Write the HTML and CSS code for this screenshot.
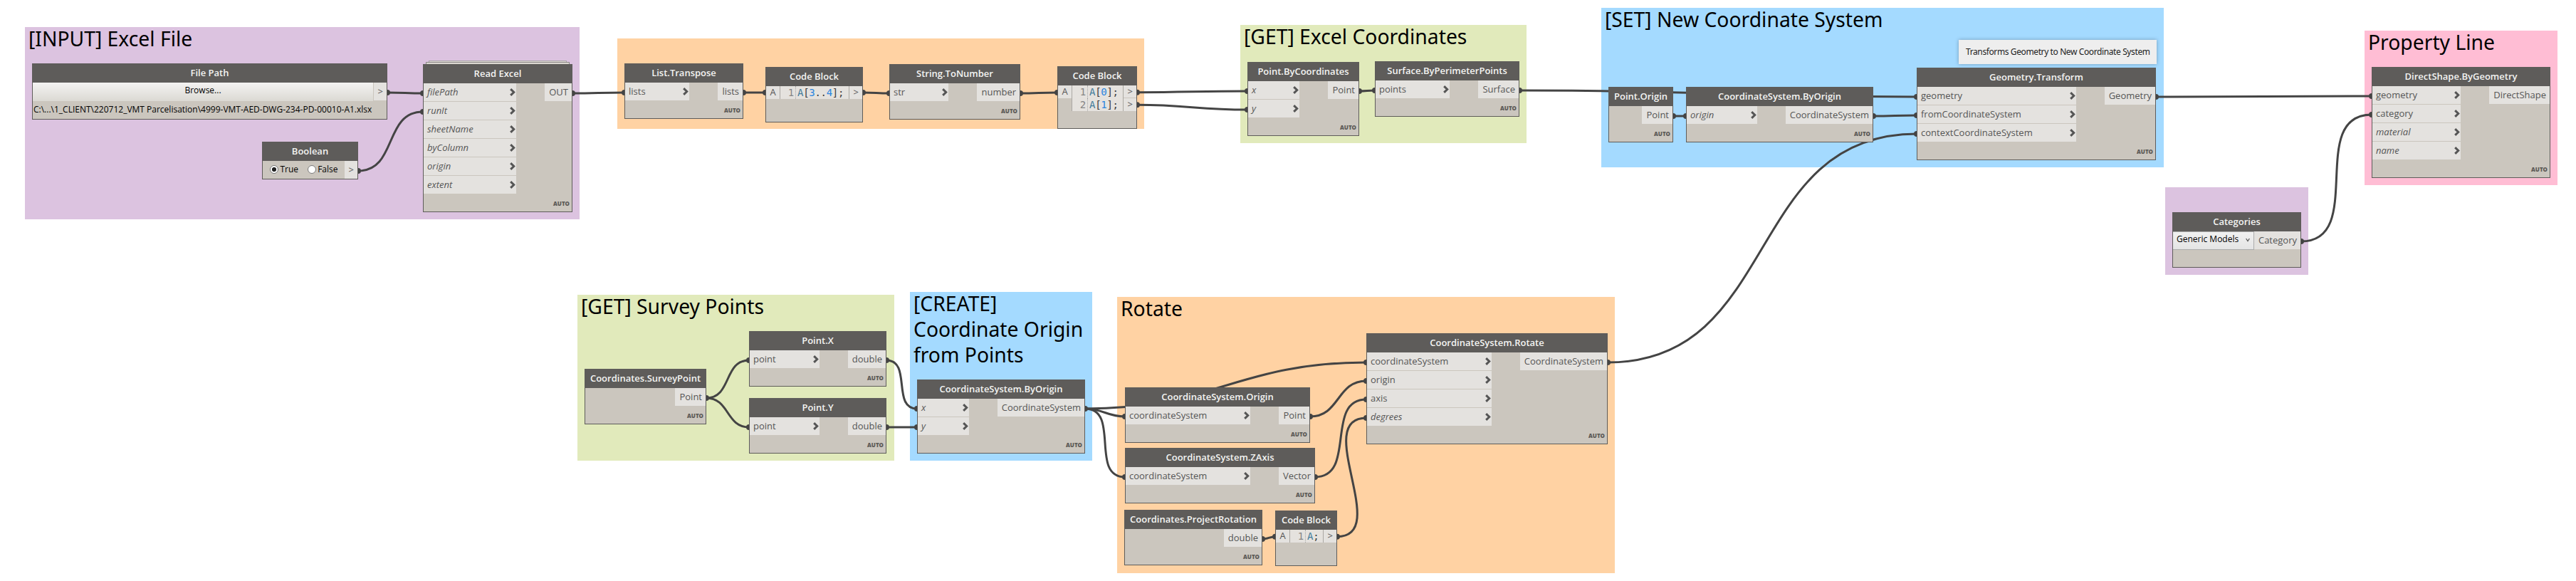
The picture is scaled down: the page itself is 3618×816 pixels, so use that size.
FILE: index.html
```
<!DOCTYPE html>
<html lang="en">
<head>
<meta charset="utf-8">
<title>Property line graph</title>
<link rel="stylesheet" href="styles.css">
</head>
<body>
<svg class="defs" aria-hidden="true">
  <symbol id="chev" viewBox="0 0 8 11"><path d="M1.2 1.1 5.7 5.5 1.2 9.9"/></symbol>
</svg>
<main class="canvas">
  <section class="group lilac g-input"><h2>[INPUT] Excel File</h2></section>
  <section class="group orange g-parse"></section>
  <section class="group green g-excel"><h2>[GET] Excel Coordinates</h2></section>
  <section class="group blue g-set"><h2>[SET] New Coordinate System</h2></section>
  <section class="group pink g-property"><h2>Property Line</h2></section>
  <section class="group lilac g-category"></section>
  <section class="group green g-survey"><h2>[GET] Survey Points</h2></section>
  <section class="group blue g-create"><h2>[CREATE]<br>Coordinate Origin<br>from Points</h2></section>
  <section class="group orange g-rotate"><h2>Rotate</h2></section>

  <svg class="wires" viewBox="0 0 3618 816">
    <g class="lines">
      <path d="M544 130C566.500 130 571.500 131 594 131"/>
      <path d="M503 240C558.400 240 538.600 157 594 157"/>
      <path d="M804 131C837 131 844 130 877 130"/>
      <path d="M1044 130H1075"/>
      <path d="M1212 130C1229 130 1232 131 1249 131"/>
      <path d="M1433 131C1456 131 1462 130 1485 130"/>
      <path d="M1597 129.700C1667 129.700 1682 128 1752 128"/>
      <path d="M1597 147.300C1667 147.300 1682 154 1752 154"/>
      <path d="M1909 128C1919 128 1921 127 1931 127"/>
      <path d="M2134 127C2385 127 2441 136 2692 136"/>
      <path d="M2350 163H2368"/>
      <path d="M2631 163C2658 163 2665 162 2692 162"/>
      <path d="M2258 509C2501 509 2449 188 2692 188"/>
      <path d="M3028 136C3164 136 3195 135 3331 135"/>
      <path d="M3232 339C3323.700 339 3239.300 161 3331 161"/>
      <path d="M992 559C1028 559 1016 506 1052 506"/>
      <path d="M992 559C1024.700 559 1019.300 600 1052 600"/>
      <path d="M1245 506C1281 506 1252 574 1288 574"/>
      <path d="M1245 600H1288"/>
      <path d="M1524 574C1704 574 1739 509 1919 509"/>
      <path d="M1524 574C1549.700 574 1554.300 585 1580 585"/>
      <path d="M1524 574C1574 574 1530 670 1580 670"/>
      <path d="M1840 585C1882 585 1877 535 1919 535"/>
      <path d="M1847 670C1906 670 1860 561 1919 561"/>
      <path d="M1773 757C1781 757 1783 753.700 1791 753.700"/>
      <path d="M1878 753.700C1955 753.700 1842 587 1919 587"/>
    </g>
    <g class="dots">
      <circle cx="544" cy="130" r="4"/><circle cx="594" cy="131" r="4"/>
      <circle cx="503" cy="240" r="4"/><circle cx="594" cy="157" r="4"/>
      <circle cx="804" cy="131" r="4"/><circle cx="877" cy="130" r="4"/>
      <circle cx="1044" cy="130" r="4"/><circle cx="1075" cy="130" r="4"/>
      <circle cx="1212" cy="130" r="4"/><circle cx="1249" cy="131" r="4"/>
      <circle cx="1433" cy="131" r="4"/><circle cx="1485" cy="130" r="4"/>
      <circle cx="1597" cy="129.700" r="4"/><circle cx="1752" cy="128" r="4"/>
      <circle cx="1597" cy="147.300" r="4"/><circle cx="1752" cy="154" r="4"/>
      <circle cx="1909" cy="128" r="4"/><circle cx="1931" cy="127" r="4"/>
      <circle cx="2134" cy="127" r="4"/><circle cx="2692" cy="136" r="4"/>
      <circle cx="2350" cy="163" r="4"/><circle cx="2368" cy="163" r="4"/>
      <circle cx="2631" cy="163" r="4"/><circle cx="2692" cy="162" r="4"/>
      <circle cx="2258" cy="509" r="4"/><circle cx="2692" cy="188" r="4"/>
      <circle cx="3028" cy="136" r="4"/><circle cx="3331" cy="135" r="4"/>
      <circle cx="3232" cy="339" r="4"/><circle cx="3331" cy="161" r="4"/>
      <circle cx="992" cy="559" r="4"/><circle cx="1052" cy="506" r="4"/>
      <circle cx="1052" cy="600" r="4"/><circle cx="1245" cy="506" r="4"/>
      <circle cx="1245" cy="600" r="4"/><circle cx="1288" cy="574" r="4"/>
      <circle cx="1288" cy="600" r="4"/><circle cx="1524" cy="574" r="4"/>
      <circle cx="1580" cy="585" r="4"/><circle cx="1580" cy="670" r="4"/>
      <circle cx="1840" cy="585" r="4"/><circle cx="1847" cy="670" r="4"/>
      <circle cx="1773" cy="757" r="4"/><circle cx="1791" cy="753.700" r="4"/>
      <circle cx="1878" cy="753.700" r="4"/><circle cx="1919" cy="509" r="4"/>
      <circle cx="1919" cy="535" r="4"/><circle cx="1919" cy="561" r="4"/>
      <circle cx="1919" cy="587" r="4"/>
    </g>
  </svg>

  <!-- Inputs -->
  <article class="node n-file">
    <h3>File Path</h3>
    <div class="body">
      <button class="browse" type="button">Browse...</button>
      <ul class="out w18"><li>&gt;</li></ul>
    </div>
    <p class="path">C:\...\1_CLIENT\220712_VMT Parcelisation\4999-VMT-AED-DWG-234-PD-00010-A1.xlsx</p>
  </article>

  <article class="node n-boolean">
    <h3>Boolean</h3>
    <div class="body">
      <div class="radios">
        <span class="radio on"></span><span class="choice">True</span>
        <span class="radio"></span><span class="choice">False</span>
      </div>
      <ul class="out w18"><li>&gt;</li></ul>
    </div>
  </article>

  <div class="stack back"></div>
  <div class="stack front"></div>
  <article class="node n-excel">
    <h3>Read Excel</h3>
    <div class="body">
      <ul class="in">
        <li class="opt">filePath<svg><use href="#chev"/></svg></li>
        <li class="opt">runIt<svg><use href="#chev"/></svg></li>
        <li class="opt">sheetName<svg><use href="#chev"/></svg></li>
        <li class="opt">byColumn<svg><use href="#chev"/></svg></li>
        <li class="opt">origin<svg><use href="#chev"/></svg></li>
        <li class="opt">extent<svg><use href="#chev"/></svg></li>
      </ul>
      <ul class="out w38"><li>OUT</li></ul>
    </div>
    <footer>AUTO</footer>
  </article>

  <!-- List handling -->
  <article class="node n-transpose">
    <h3>List.Transpose</h3>
    <div class="body">
      <ul class="in"><li>lists<svg><use href="#chev"/></svg></li></ul>
      <ul class="out w35"><li>lists</li></ul>
    </div>
    <footer>AUTO</footer>
  </article>

  <article class="node code n-code1">
    <h3>Code Block</h3>
    <div class="body">
      <ul class="var"><li>A</li></ul>
      <div class="editor">
        <div class="ln">1</div><div class="src"><b>A</b>[<i>3</i>..<i>4</i>];</div>
      </div>
      <ul class="res"><li>&gt;</li></ul>
    </div>
  </article>

  <article class="node n-tonumber">
    <h3>String.ToNumber</h3>
    <div class="body">
      <ul class="in"><li>str<svg><use href="#chev"/></svg></li></ul>
      <ul class="out w60"><li>number</li></ul>
    </div>
    <footer>AUTO</footer>
  </article>

  <article class="node code n-code2">
    <h3>Code Block</h3>
    <div class="body">
      <ul class="var"><li>A</li></ul>
      <div class="editor">
        <div class="ln">1</div><div class="src"><b>A</b>[<i>0</i>];</div>
        <div class="ln">2</div><div class="src"><b>A</b>[<i>1</i>];</div>
      </div>
      <ul class="res"><li>&gt;</li><li>&gt;</li></ul>
    </div>
  </article>

  <!-- Excel coordinates -->
  <article class="node n-bycoord">
    <h3>Point.ByCoordinates</h3>
    <div class="body">
      <ul class="in">
        <li class="opt">x<svg><use href="#chev"/></svg></li>
        <li class="opt">y<svg><use href="#chev"/></svg></li>
      </ul>
      <ul class="out w43"><li>Point</li></ul>
    </div>
    <footer>AUTO</footer>
  </article>

  <article class="node n-surface">
    <h3>Surface.ByPerimeterPoints</h3>
    <div class="body">
      <ul class="in"><li>points<svg><use href="#chev"/></svg></li></ul>
      <ul class="out w57"><li>Surface</li></ul>
    </div>
    <footer>AUTO</footer>
  </article>

  <!-- New coordinate system -->
  <article class="node n-origin">
    <h3>Point.Origin</h3>
    <div class="body"><ul class="out w43"><li>Point</li></ul></div>
    <footer>AUTO</footer>
  </article>

  <article class="node n-byorigin1">
    <h3>CoordinateSystem.ByOrigin</h3>
    <div class="body">
      <ul class="in"><li class="opt">origin<svg><use href="#chev"/></svg></li></ul>
      <ul class="out w122"><li>CoordinateSystem</li></ul>
    </div>
    <footer>AUTO</footer>
  </article>

  <p class="note">Transforms Geometry to New Coordinate System</p>

  <article class="node n-transform">
    <h3>Geometry.Transform</h3>
    <div class="body">
      <ul class="in">
        <li>geometry<svg><use href="#chev"/></svg></li>
        <li>fromCoordinateSystem<svg><use href="#chev"/></svg></li>
        <li>contextCoordinateSystem<svg><use href="#chev"/></svg></li>
      </ul>
      <ul class="out w71"><li>Geometry</li></ul>
    </div>
    <footer>AUTO</footer>
  </article>

  <!-- Property line -->
  <article class="node n-shape">
    <h3>DirectShape.ByGeometry</h3>
    <div class="body">
      <ul class="in">
        <li>geometry<svg><use href="#chev"/></svg></li>
        <li>category<svg><use href="#chev"/></svg></li>
        <li class="opt">material<svg><use href="#chev"/></svg></li>
        <li class="opt">name<svg><use href="#chev"/></svg></li>
      </ul>
      <ul class="out w85"><li>DirectShape</li></ul>
    </div>
    <footer>AUTO</footer>
  </article>

  <article class="node n-categories">
    <h3>Categories</h3>
    <div class="body">
      <div class="select">Generic Models<svg viewBox="0 0 6 6"><path d="M.6 1 3 4.600 5.400 1"/></svg></div>
      <ul class="out w65"><li>Category</li></ul>
    </div>
  </article>

  <!-- Survey points -->
  <article class="node n-survey">
    <h3>Coordinates.SurveyPoint</h3>
    <div class="body"><ul class="out w43"><li>Point</li></ul></div>
    <footer>AUTO</footer>
  </article>

  <article class="node n-pointx">
    <h3>Point.X</h3>
    <div class="body">
      <ul class="in"><li>point<svg><use href="#chev"/></svg></li></ul>
      <ul class="out w53"><li>double</li></ul>
    </div>
    <footer>AUTO</footer>
  </article>

  <article class="node n-pointy">
    <h3>Point.Y</h3>
    <div class="body">
      <ul class="in"><li>point<svg><use href="#chev"/></svg></li></ul>
      <ul class="out w53"><li>double</li></ul>
    </div>
    <footer>AUTO</footer>
  </article>

  <article class="node n-byorigin2">
    <h3>CoordinateSystem.ByOrigin</h3>
    <div class="body">
      <ul class="in">
        <li class="opt">x<svg><use href="#chev"/></svg></li>
        <li class="opt">y<svg><use href="#chev"/></svg></li>
      </ul>
      <ul class="out w122"><li>CoordinateSystem</li></ul>
    </div>
    <footer>AUTO</footer>
  </article>

  <!-- Rotation -->
  <article class="node n-csorigin">
    <h3>CoordinateSystem.Origin</h3>
    <div class="body">
      <ul class="in"><li>coordinateSystem<svg><use href="#chev"/></svg></li></ul>
      <ul class="out w43"><li>Point</li></ul>
    </div>
    <footer>AUTO</footer>
  </article>

  <article class="node n-zaxis">
    <h3>CoordinateSystem.ZAxis</h3>
    <div class="body">
      <ul class="in"><li>coordinateSystem<svg><use href="#chev"/></svg></li></ul>
      <ul class="out w50"><li>Vector</li></ul>
    </div>
    <footer>AUTO</footer>
  </article>

  <article class="node n-project">
    <h3>Coordinates.ProjectRotation</h3>
    <div class="body"><ul class="out w53"><li>double</li></ul></div>
    <footer>AUTO</footer>
  </article>

  <article class="node code n-code3">
    <h3>Code Block</h3>
    <div class="body">
      <ul class="var"><li>A</li></ul>
      <div class="editor">
        <div class="ln">1</div><div class="src"><b>A</b>;</div>
      </div>
      <ul class="res"><li>&gt;</li></ul>
    </div>
  </article>

  <article class="node n-rotate">
    <h3>CoordinateSystem.Rotate</h3>
    <div class="body">
      <ul class="in">
        <li>coordinateSystem<svg><use href="#chev"/></svg></li>
        <li>origin<svg><use href="#chev"/></svg></li>
        <li>axis<svg><use href="#chev"/></svg></li>
        <li class="opt">degrees<svg><use href="#chev"/></svg></li>
      </ul>
      <ul class="out w122"><li>CoordinateSystem</li></ul>
    </div>
    <footer>AUTO</footer>
  </article>
</main>
</body>
</html>
```
FILE: styles.css
```
* { box-sizing: border-box; margin: 0; padding: 0; }

body {
  background: #fff;
  font: 13px/24px "Open Sans", "Noto Sans", sans-serif;
  overflow: hidden;
}

ul { list-style: none; }
.defs { display: none; }

.canvas {
  position: relative;
  width: 3618px;
  height: 816px;
  overflow: hidden;
}

/* Groups */
.group { position: absolute; padding: 0 5px; }
.group h2 {
  margin-top: -2px;
  font: 400 28.300px/36px "Noto Sans", "Open Sans", sans-serif;
  color: #000;
  white-space: nowrap;
}
.lilac { background: #dcc3e0; }
.orange { background: #ffd2a3; }
.green { background: #e1eabb; }
.blue { background: #a4daff; }
.pink { background: #ffbdd4; }

.g-input { left: 35px; top: 38px; width: 779px; height: 270px; }
.g-parse { left: 867px; top: 54px; width: 740px; height: 127px; }
.g-excel { left: 1742px; top: 35px; width: 402px; height: 166px; }
.g-set { left: 2249px; top: 11px; width: 790px; height: 224px; }
.g-property { left: 3321px; top: 43px; width: 271px; height: 217px; }
.g-category { left: 3041px; top: 263px; width: 201px; height: 123px; }
.g-survey { left: 811px; top: 414px; width: 445px; height: 233px; }
.g-create { left: 1278px; top: 410px; width: 256px; height: 237px; }
.g-rotate { left: 1569px; top: 417px; width: 699px; height: 388px; }

/* Wires */
.wires { position: absolute; inset: 0; width: 3618px; height: 816px; }
.lines { fill: none; stroke: #444; stroke-width: 3; }
.dots { fill: #444; }

/* Nodes */
.node {
  position: absolute;
  display: flex;
  flex-direction: column;
  border: 1px solid #5e5c5a;
  background: #cbc6be;
  color: #555;
}
.node h3 {
  flex: none;
  height: 26px;
  background: #5e5c5a;
  color: #f4f4f2;
  font-size: 13px;
  font-weight: 600;
  line-height: 24px;
  text-align: center;
  white-space: nowrap;
}
.body { flex: 1; display: flex; align-items: flex-start; }
.node footer {
  flex: none;
  height: 17px;
  padding-right: 3px;
  font-size: 8px;
  font-weight: 800;
  line-height: 12px;
  text-align: right;
  color: #5b5956;
}

.in { flex: 1; display: flex; flex-direction: column; gap: 1px; margin-right: 40px; }
.in li {
  display: flex;
  align-items: center;
  justify-content: space-between;
  height: 25px;
  padding: 0 1px 1px 5px;
  background: #e4e2df;
}
.in svg { width: 8px; height: 11px; }
#chev path { fill: none; stroke: #555; stroke-width: 3; }
.opt { font-style: italic; }
.out { flex: none; margin-left: auto; }
.out li {
  height: 25px;
  padding-right: 5px;
  background: #e4e2df;
  text-align: right;
}
.w18 { width: 18px; }
.w35 { width: 35px; }
.w38 { width: 38px; }
.w43 { width: 43px; }
.w50 { width: 50px; }
.w53 { width: 53px; }
.w57 { width: 57px; }
.w60 { width: 60px; }
.w65 { width: 65px; }
.w71 { width: 71px; }
.w85 { width: 85px; }
.w122 { width: 122px; }

/* Code blocks */
.code .body { line-height: 16px; }
.var { width: 19px; }
.var li { height: 18px; text-align: center; background: #e4e2df; }
.res { width: 18px; display: flex; flex-direction: column; gap: 1px; }
.res li { height: 17px; padding-right: 5px; text-align: right; background: #e4e2df; }
.res li:last-child { height: 18px; }
.editor {
  flex: 1;
  display: grid;
  grid-template-columns: 22px 1fr;
  grid-auto-rows: 18px;
  border: solid #aba8a3;
  border-width: 0 1px;
  background: #e5e2de;
  font: 14px/18px "DejaVu Sans Mono", monospace;
  letter-spacing: -.3px;
}
.ln { padding-right: 2px; border-right: 1px dotted #a5a5a5; text-align: right; color: #858585; }
.src { padding-left: 2px; color: #3d3d3d; white-space: nowrap; }
.src b { font-weight: 400; color: #3f7b9a; }
.src i { font-style: normal; color: #2a86e0; }

/* Input widgets */
.browse {
  width: 478px;
  height: 26px;
  padding-bottom: 4px;
  border: 0;
  background: linear-gradient(#f4f3f2, #dbd9d3);
  font: 12px/22px "Open Sans", sans-serif;
  color: #000;
}
.path {
  height: 25px;
  padding-left: 1px;
  font-size: 12px;
  line-height: 23px;
  color: #000;
  white-space: nowrap;
}
.radios { display: flex; align-items: center; height: 24px; padding-left: 10px; }
.radio {
  width: 12px;
  height: 12px;
  border: 1px solid #7a7a7a;
  border-radius: 50%;
  background: #fff;
}
.radio.on { background: radial-gradient(circle, #222 2.800px, #fff 3.400px); }
.choice { margin: 0 12.500px 0 2.500px; font-size: 12px; color: #000; }
.choice:last-child { margin-right: 0; }
.select {
  flex: 1;
  display: flex;
  justify-content: space-between;
  height: 26px;
  padding: 0 5px;
  border: 1px solid #acacac;
  border-left: 0;
  background: linear-gradient(#f1f1f1, #e5e5e5);
  font-size: 12px;
  line-height: 20px;
  color: #000;
}
.select svg { width: 6px; height: 6px; margin-top: 8px; fill: none; stroke: #555; stroke-width: 1.200; }

.note {
  position: absolute;
  left: 2751px;
  top: 56px;
  width: 278px;
  height: 34px;
  padding-left: 10px;
  background: #eee;
  box-shadow: 0 0 5px rgba(40, 60, 80, .4);
  color: #222;
  font: 12px/33px "Noto Sans", sans-serif;
  letter-spacing: -.390px;
  white-space: nowrap;
}

/* List-level stack behind Read Excel */
.stack { position: absolute; height: 8px; border: 1px solid #8c8987; background: #dcd8d2; }
.back { left: 602px; top: 85px; width: 194px; border-color: #aaa5aa; }
.front { left: 598px; top: 87px; width: 202px; }

/* Node placement on the canvas */
.n-file { left: 45px; top: 89px; width: 499px; height: 79px; }
.n-boolean { left: 368px; top: 199px; width: 135px; height: 53px; }
.n-excel { left: 594px; top: 90px; width: 210px; height: 208px; }
.n-transpose { left: 877px; top: 89px; width: 167px; height: 78px; }
.n-code1 { left: 1075px; top: 94px; width: 137px; height: 78px; }
.n-tonumber { left: 1249px; top: 90px; width: 184px; height: 78px; }
.n-code2 { left: 1485px; top: 93px; width: 112px; height: 88px; }
.n-bycoord { left: 1752px; top: 87px; width: 157px; height: 104px; }
.n-surface { left: 1931px; top: 86px; width: 203px; height: 78px; }
.n-origin { left: 2259px; top: 122px; width: 91px; height: 78px; }
.n-byorigin1 { left: 2368px; top: 122px; width: 263px; height: 78px; }
.n-transform { left: 2692px; top: 95px; width: 336px; height: 130px; }
.n-shape { left: 3331px; top: 94px; width: 251px; height: 156px; }
.n-categories { left: 3051px; top: 298px; width: 181px; height: 78px; }
.n-survey { left: 821px; top: 518px; width: 171px; height: 78px; }
.n-pointx { left: 1052px; top: 465px; width: 193px; height: 78px; }
.n-pointy { left: 1052px; top: 559px; width: 193px; height: 78px; }
.n-byorigin2 { left: 1288px; top: 533px; width: 236px; height: 104px; }
.n-csorigin { left: 1580px; top: 544px; width: 260px; height: 78px; }
.n-zaxis { left: 1580px; top: 629px; width: 267px; height: 78px; }
.n-project { left: 1579px; top: 716px; width: 194px; height: 78px; }
.n-code3 { left: 1791px; top: 717px; width: 87px; height: 78px; }
.n-rotate { left: 1919px; top: 468px; width: 339px; height: 156px; }
```
